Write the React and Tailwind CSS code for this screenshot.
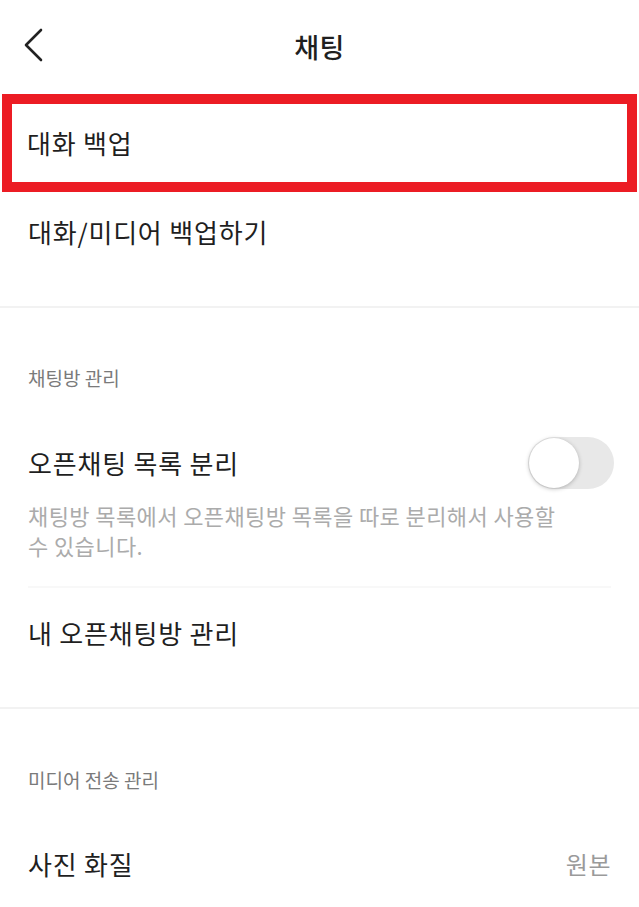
import React from 'react';

const font = { fontFamily: '"Noto Sans CJK KR", "Noto Sans", sans-serif' };

function Toggle() {
  return (
    <div className="relative h-[52px] w-[86px] rounded-full bg-[#e8e8e8]">
      <div className="absolute left-[1px] top-[1px] h-[50px] w-[50px] rounded-full bg-white shadow-[0_1px_4px_rgba(0,0,0,0.25)]" />
    </div>
  );
}

export default function App() {
  return (
    <div className="min-h-[907px] w-[639px] bg-white text-[#1f1f1f]" style={font}>
      {/* 헤더 */}
      <div className="relative flex h-[92px] items-center justify-center">
        <svg className="absolute left-[22px] top-[28px]" width="22" height="34" viewBox="0 0 22 34" fill="none">
          <polyline points="19,2 4,17 19,32" stroke="#222" strokeWidth="2.6" strokeLinecap="round" strokeLinejoin="round" />
        </svg>
        <h1 className="text-[27px] font-medium leading-none tracking-[0.5px]">채팅</h1>
      </div>

      {/* 대화 백업 (강조 박스) */}
      <div className="mx-[2px] mt-[2px] flex h-[98px] items-center border-[10px] border-[#ec1c24] pl-[15px]">
        <span className="text-[26px] leading-none tracking-[0.8px]">대화 백업</span>
      </div>

      <div className="flex h-[80px] items-center px-[28px]">
        <span className="text-[26px] leading-none tracking-[0.8px]">대화/미디어 백업하기</span>
      </div>
      <div className="h-[34px]" />
      <div className="h-[2px] bg-[#f2f2f2]" />

      {/* 채팅방 관리 */}
      <div className="px-[28px] pt-[58px] text-[19px] leading-[24px] text-[#7a7a7a]">채팅방 관리</div>

      <div className="mt-[45px] flex h-[56px] items-center justify-between pl-[28px] pr-[25px]">
        <span className="text-[26px] leading-none tracking-[0.8px]">오픈채팅 목록 분리</span>
        <Toggle />
      </div>
      <p className="mt-[9px] w-[598px] px-[28px] text-[22px] leading-[30px] tracking-[0.4px] text-[#ababab]">
        채팅방 목록에서 오픈채팅방 목록을 따로 분리해서 사용할 수 있습니다.
      </p>
      <div className="mx-[28px] mt-[26px] h-[2px] bg-[#f8f8f8]" />

      <div className="mt-[17px] flex h-[56px] items-center px-[28px]">
        <span className="text-[26px] leading-none tracking-[0.8px]">내 오픈채팅방 관리</span>
      </div>
      <div className="mt-[46px] h-[2px] bg-[#f2f2f2]" />

      {/* 미디어 전송 관리 */}
      <div className="px-[28px] pt-[59px] text-[19px] leading-[24px] text-[#7a7a7a]">미디어 전송 관리</div>

      <div className="mt-[44px] flex h-[56px] items-center justify-between px-[28px]">
        <span className="text-[26px] leading-none tracking-[0.8px]">사진 화질</span>
        <span className="text-[24px] leading-none tracking-[0.5px] text-[#9a9a9a]">원본</span>
      </div>
    </div>
  );
}
